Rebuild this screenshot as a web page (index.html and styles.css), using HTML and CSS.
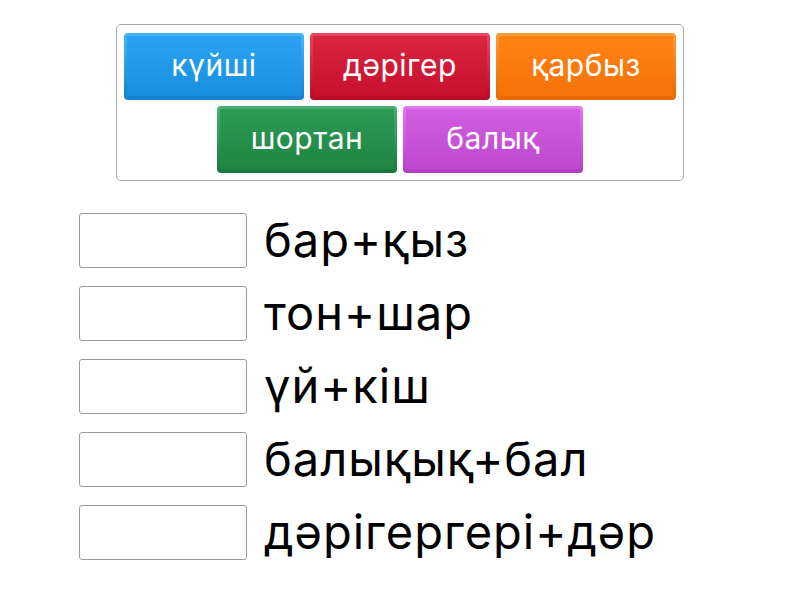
FILE: index.html
```html
<!DOCTYPE html>
<html>
<head>
<meta charset="utf-8">
<link rel="stylesheet" href="styles.css">
</head>
<body>
<div class="bank">
  <div class="tile blue"><span>күйші</span></div>
  <div class="tile red"><span>дәрігер</span></div>
  <div class="tile orange"><span>қарбыз</span></div>
  <div class="tile green"><span>шортан</span></div>
  <div class="tile purple"><span>балық</span></div>
</div>
<div class="rows">
  <div class="row"><div class="slot"></div><div class="clue">бар+қыз</div></div>
  <div class="row"><div class="slot"></div><div class="clue">тон+шар</div></div>
  <div class="row"><div class="slot"></div><div class="clue">үй+кіш</div></div>
  <div class="row"><div class="slot"></div><div class="clue">балықық+бал</div></div>
  <div class="row"><div class="slot"></div><div class="clue">дәрігергері+дәр</div></div>
</div>
</body>
</html>
```

FILE: styles.css
```css
html, body {
  margin: 0;
  padding: 0;
  background: #fff;
  font-family: Inter, Roboto, sans-serif;
}

.bank {
  box-sizing: border-box;
  width: 568px;
  margin: 24px auto 0;
  padding: 8px 6px 7px;
  border: 1px solid #a8a8a8;
  border-radius: 5px;
  display: flex;
  flex-wrap: wrap;
  justify-content: center;
  gap: 6px 6px;
}

.tile {
  box-sizing: border-box;
  width: 180px;
  height: 67px;
  border-radius: 4px;
  display: flex;
  align-items: center;
  justify-content: center;
  color: #fff;
  font-size: 30px;
  letter-spacing: 0.5px;
  padding-bottom: 3px;
  border: 3px solid transparent;
  border-bottom-width: 4px;
}

.tile span { line-height: 1; }

.blue {
  background: linear-gradient(#2aa3f2, #1a8fdf) padding-box, linear-gradient(#48b6fa, #1480cf) border-box;
}
.red {
  background: linear-gradient(#da2540, #c8102d) padding-box, linear-gradient(#ee4560, #b80a24) border-box;
}
.orange {
  background: linear-gradient(#ff8414, #f57206) padding-box, linear-gradient(#ff9a3a, #e86800) border-box;
}
.green {
  background: linear-gradient(#2c9a54, #1f8543) padding-box, linear-gradient(#4bb06f, #187a3a) border-box;
}
.purple {
  background: linear-gradient(#d05ee0, #bf48d0) padding-box, linear-gradient(#e679f2, #b23ec4) border-box;
}

.rows {
  margin: 32px 0 0 79px;
  display: flex;
  flex-direction: column;
  gap: 18px;
}

.row {
  display: flex;
  align-items: center;
  gap: 17px;
  height: 55px;
}

.slot {
  box-sizing: border-box;
  width: 168px;
  height: 55px;
  border: 1px solid #9a9a9a;
  border-radius: 3px;
  background: #fff;
}

.clue {
  font-size: 47px;
  letter-spacing: 1px;
  color: #000;
  line-height: 55px;
  padding-bottom: 3px;
  white-space: nowrap;
}
```
